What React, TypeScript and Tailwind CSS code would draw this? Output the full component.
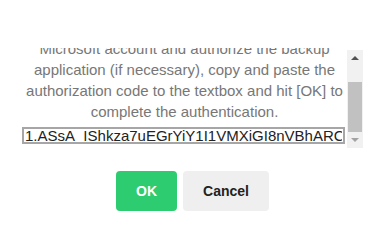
import React from "react";

const arial = { fontFamily: '"Liberation Sans", Arial, sans-serif' };

function FakeScrollbar() {
    return (
        <div className="mt-[2px] flex h-[98px] w-[16px] flex-col bg-[#f1f1f1]">
            <div className="flex h-[16px] items-center justify-center">
                <div className="h-0 w-0 border-x-[4px] border-b-[4px] border-x-transparent border-b-[#505050]" />
            </div>
            <div className="flex-1" />
            <div className="mx-auto h-[50px] w-[14px] bg-[#c1c1c1]" />
            <div className="flex h-[16px] items-center justify-center">
                <div className="h-0 w-0 border-x-[4px] border-t-[4px] border-x-transparent border-t-[#a3a3a3]" />
            </div>
        </div>
    );
}

export default function App() {
    return (
        <div
            className="h-[240px] w-[390px] overflow-hidden bg-white"
            style={arial}
        >
            <div className="flex pt-[48px] pl-[22px]">
                <div className="h-[100px] w-[325px] overflow-hidden">
                    <div className="-mt-[10px] text-center text-[15px] leading-[21px] text-[#777777]">
                        <p>Microsoft account and authorize the backup</p>
                        <p>application (if necessary), copy and paste the</p>
                        <p>authorization code to the textbox and hit [OK] to</p>
                        <p>complete the authentication.</p>
                        <input
                            readOnly
                            value="1.ASsA_IShkza7uEGrYiY1I1VMXiGI8nVBhARCiY2kQwE"
                            className="mt-[5px] block h-[17px] w-[323px] border-2 border-[#a6a6a6] bg-white px-[1px] text-[15px] leading-[13px] text-[#222222] outline-none"
                            style={arial}
                        />
                    </div>
                </div>
                <FakeScrollbar />
            </div>
            <div className="mt-[23px] flex justify-center gap-[6px] pr-[5px] text-[14px] font-bold">
                <button className="h-[40px] w-[61px] rounded-[4px] bg-[#2ecc71] text-white">
                    OK
                </button>
                <button className="h-[40px] w-[86px] rounded-[4px] bg-[#efefef] text-[#222222]">
                    Cancel
                </button>
            </div>
        </div>
    );
}
